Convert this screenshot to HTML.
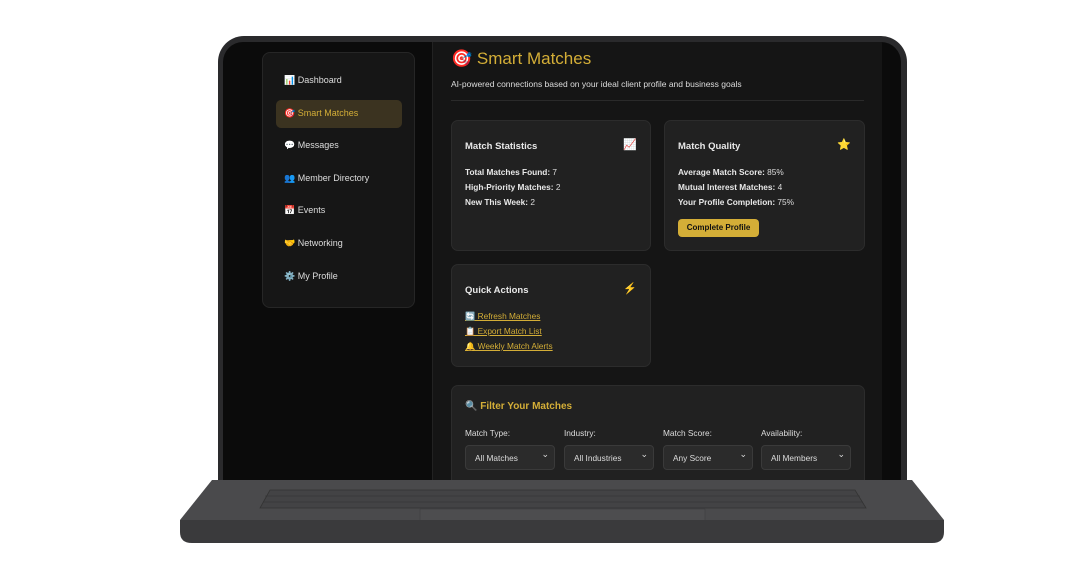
<!DOCTYPE html>
<html><head><meta charset="utf-8"><style>
*{margin:0;padding:0;box-sizing:border-box}
body{width:1080px;height:564px;background:#fff;position:relative;overflow:hidden;font-family:"Liberation Sans","Noto Sans CJK SC",sans-serif;color:#ddd}
.abs{position:absolute}
.lid{left:218px;top:36px;width:689px;height:452px;background:#2a2a2c;border-radius:26px 26px 0 0}
.screen{left:223px;top:42px;width:678px;height:440px;background:#0b0b0b;border-radius:20px 20px 0 0;overflow:hidden}
.side{left:39px;top:10px;width:153px;height:256px;background:#161616;border:1px solid #262626;border-radius:8px}
.nav{position:absolute;left:21px;font-size:9px;color:#ddd}
.active{position:absolute;left:13px;top:47px;width:126px;height:28px;background:#3b3320;border-radius:5px}
.main{left:209px;top:0;width:450px;height:440px;background:#151515;border-left:1px solid #222}
.card{position:absolute;background:#212121;border:1px solid #2c2c2c;border-radius:7px}
.ct{position:absolute;left:13px;top:20px;font-size:9.5px;font-weight:bold;color:#e8e8e8}
.ci{position:absolute;right:13px;top:17px;font-size:11px}
.line{font-size:8.3px;color:#ddd;line-height:15px}
.line b{color:#e8e8e8}
a{color:#d4ae37;font-size:8.3px;line-height:15px;display:block;text-decoration:underline}
.sel{position:absolute;top:59px;width:90px;height:25px;background:#2b2b2b;border:1px solid #3a3a3a;border-radius:4px;font-size:8.3px;color:#ddd;padding:7px 0 0 9px}
.sel:after{content:"⌄";position:absolute;right:5px;top:3px;font-size:9px}
.lab{position:absolute;top:42px;font-size:8.3px;color:#ddd}
</style></head><body>
<div class="abs lid"></div>
<div class="abs screen">
 <div class="abs side">
  <div class="active"></div>
  <div class="nav" style="top:22px">📊 Dashboard</div>
  <div class="nav" style="top:55px;color:#d4ae37">🎯 Smart Matches</div>
  <div class="nav" style="top:87px">💬 Messages</div>
  <div class="nav" style="top:120px">👥 Member Directory</div>
  <div class="nav" style="top:152px">📅 Events</div>
  <div class="nav" style="top:185px">🤝 Networking</div>
  <div class="nav" style="top:218px">⚙️ My Profile</div>
 </div>
 <div class="abs main">
  <div class="abs" style="left:18px;top:7px;font-size:17px;color:#d4ae37">🎯 Smart Matches</div>
  <div class="abs" style="left:18px;top:37px;font-size:8.5px;color:#ddd">AI-powered connections based on your ideal client profile and business goals</div>
  <div class="abs" style="left:18px;top:58px;width:413px;height:1px;background:#2a2a2a"></div>
  <div class="card" style="left:18px;top:78px;width:200px;height:131px">
   <div class="ct">Match Statistics</div><div class="ci">📈</div>
   <div class="abs" style="left:13px;top:44px">
    <div class="line"><b>Total Matches Found:</b> 7</div>
    <div class="line"><b>High-Priority Matches:</b> 2</div>
    <div class="line"><b>New This Week:</b> 2</div></div>
  </div>
  <div class="card" style="left:231px;top:78px;width:201px;height:131px">
   <div class="ct">Match Quality</div><div class="ci">⭐</div>
   <div class="abs" style="left:13px;top:44px;white-space:nowrap">
    <div class="line"><b>Average Match Score:</b> 85%</div>
    <div class="line"><b>Mutual Interest Matches:</b> 4</div>
    <div class="line"><b>Your Profile Completion:</b> 75%</div></div>
   <div class="abs" style="left:13px;top:98px;width:81px;height:18px;background:#d4ae37;border-radius:4px;color:#111;font-size:8px;font-weight:bold;text-align:center;line-height:18px">Complete Profile</div>
  </div>
  <div class="card" style="left:18px;top:222px;width:200px;height:103px">
   <div class="ct">Quick Actions</div><div class="ci" style="color:#d4ae37">⚡</div>
   <div class="abs" style="left:13px;top:44px;white-space:nowrap">
    <a>🔄 Refresh Matches</a><a>📋 Export Match List</a><a>🔔 Weekly Match Alerts</a></div>
  </div>
  <div class="card" style="left:18px;top:343px;width:414px;height:110px">
   <div class="abs" style="left:13px;top:15px;font-size:10px;font-weight:bold;color:#d4ae37">🔍 Filter Your Matches</div>
   <div class="lab" style="left:13px">Match Type:</div>
   <div class="lab" style="left:112px">Industry:</div>
   <div class="lab" style="left:211px">Match Score:</div>
   <div class="lab" style="left:309px">Availability:</div>
   <div class="sel" style="left:13px">All Matches</div>
   <div class="sel" style="left:112px">All Industries</div>
   <div class="sel" style="left:211px">Any Score</div>
   <div class="sel" style="left:309px">All Members</div>
  </div>
 </div>
</div>
<svg class="abs" style="left:0;top:0" width="1080" height="564">
 <polygon points="212,480 912,480 944,520 180,520" fill="#4a4a4c"/>
 <polygon points="270,490 855,490 866,508 260,508" fill="#434345" stroke="#333" stroke-width="0.8"/>
 <g stroke="#333" stroke-width="0.6"><line x1="265" y1="496" x2="860" y2="496"/><line x1="263" y1="502" x2="863" y2="502"/></g>
 <rect x="420" y="509" width="285" height="12" fill="#4d4d4f" stroke="#3c3c3e" stroke-width="0.6"/>
 <path d="M180,520 L944,520 L944,532 Q944,543 932,543 L192,543 Q180,543 180,532 Z" fill="#3a3a3c"/>
</svg>
</body></html>
